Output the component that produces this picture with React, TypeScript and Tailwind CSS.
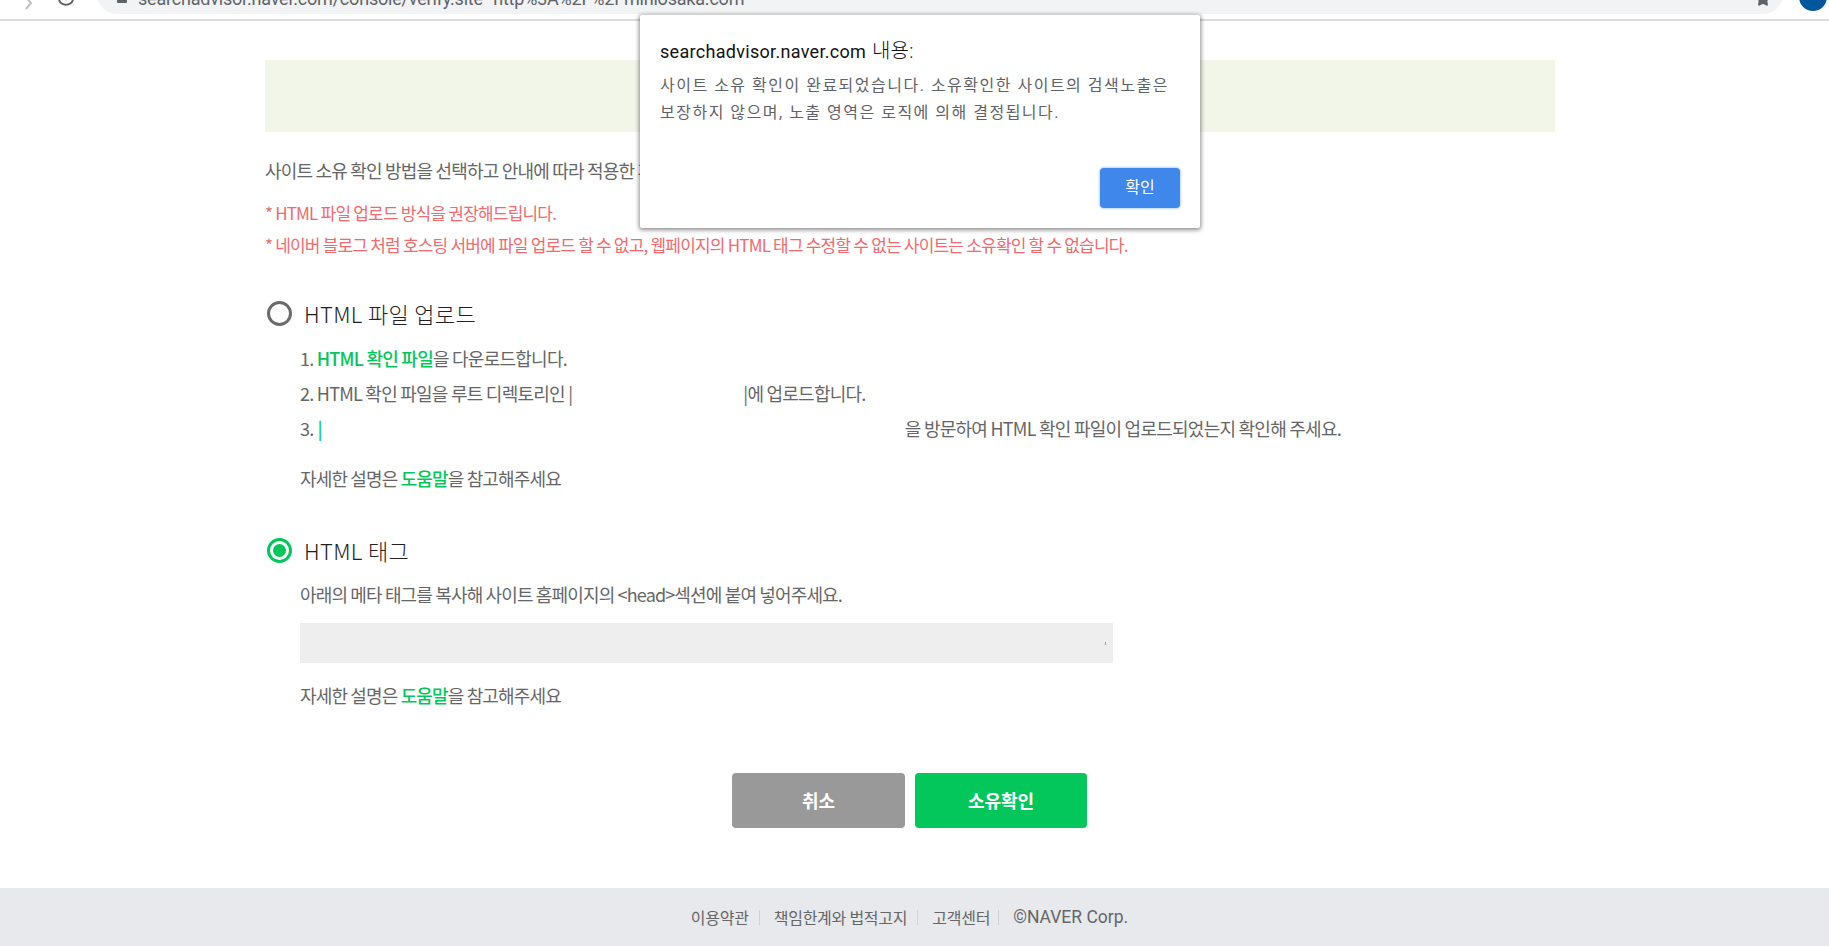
import { Star } from 'lucide-react';

const kr = '[font-family:"Noto_Sans_CJK_KR","Noto_Sans",sans-serif]';

const BrowserBar = () => (
  <div className="h-[21px] overflow-hidden border-b-2 border-[#dadce0] bg-white relative flex">
    <svg className="absolute left-[24px] top-0" width="10" height="14" viewBox="0 0 10 14" fill="none">
      <path d="M2 -3 L7 3 L2 9" stroke="#bdc1c6" strokeWidth="2" />
    </svg>
    <svg className="absolute left-[55px] top-0" width="22" height="14" viewBox="0 0 22 14" fill="none">
      <path d="M4 0 A7.5 7.5 0 0 0 18 0" stroke="#5f6368" strokeWidth="2" />
    </svg>
    <div className="ml-[97px] mt-[-26px] h-[40px] w-[1686px] rounded-full bg-[#f1f3f4] flex items-end relative">
      <div className="absolute left-[20px] bottom-[11px] h-[5px] w-[10px] rounded-[1px] bg-[#5f6368]" />
      <div className="ml-[41px] mb-[3px] text-[18px] leading-[24px] tracking-[-0.2px] text-[#5f6368] whitespace-nowrap font-['Roboto',sans-serif]">
        searchadvisor.naver.com/console/verify.site <span className="ml-[6px]">http%3A%2F%2Fminiosaka.com</span>
      </div>
      <Star className="absolute right-[12px] bottom-[7px] h-[16px] w-[16px] fill-[#5f6368] text-[#5f6368]" />
    </div>
    <div className="absolute left-[1799px] top-[-17px] h-[28px] w-[28px] rounded-full bg-[#01579b]" />
  </div>
);

const Radio = ({ on }: { on?: boolean }) =>
  on ? (
    <span className="h-[25px] w-[25px] rounded-full border-[3px] border-[#03c75a] flex items-center justify-center shrink-0">
      <span className="h-[13px] w-[13px] rounded-full bg-[#03c75a]" />
    </span>
  ) : (
    <span className="h-[25px] w-[25px] rounded-full border-[3px] border-[#6b6b6b] shrink-0" />
  );

const Green = ({ children }: { children: React.ReactNode }) => (
  <span className="text-[#03c75a] font-medium">{children}</span>
);

const Help = () => (
  <p className="text-[18px] leading-[24px] tracking-[-0.85px] text-[#666]">
    자세한 설명은 <Green>도움말</Green>을 참고해주세요
  </p>
);

const Dialog = () => (
  <div className="absolute left-[640px] top-[15px] h-[213px] w-[560px] rounded-[2px] bg-white shadow-[0_1px_4px_1px_rgba(0,0,0,0.45)] pl-[20px] pr-[20px] flex flex-col">
    <div className="mt-[24px] h-[24px] text-[18px] leading-[24px] tracking-[0.3px] text-[#111] whitespace-nowrap font-['Roboto','Noto_Sans_CJK_KR',sans-serif]">
      searchadvisor.naver.com <span className="ml-[1px] text-[20px] font-light">내용:</span>
    </div>
    <p className="mt-[9px] text-[16px] leading-[27px] tracking-[1.5px] text-[#5f6368] whitespace-nowrap font-['Roboto','Noto_Sans_CJK_KR',sans-serif]">
      사이트 소유 확인이 완료되었습니다. 소유확인한 사이트의 검색노출은
      <br />
      보장하지 않으며, 노출 영역은 로직에 의해 결정됩니다.
    </p>
    <button className="mt-[42px] self-end h-[40px] w-[80px] rounded-[4px] bg-[#3f87ea] shadow-[0_0_2px_1px_rgba(63,135,234,0.35)] text-white text-[16px] font-['Roboto','Noto_Sans_CJK_KR',sans-serif]">
      확인
    </button>
  </div>
);

export default function App() {
  return (
    <div className={`relative h-[946px] w-[1829px] overflow-hidden bg-white flex flex-col ${kr}`}>
      <BrowserBar />

      <main className="ml-[265px] w-[1290px]">
        <div className="mt-[39px] h-[72px] bg-[#f1f6e9]" />

        <p className="mt-[26px] text-[18px] leading-[24px] tracking-[-0.8px] text-[#666]">
          사이트 소유 확인 방법을 선택하고 안내에 따라 적용한 후 소유확인 버튼을 눌러주세요.
        </p>
        <p className="mt-[20px] text-[17px] leading-[22px] tracking-[-0.8px] text-[#f06a6e]">
          * HTML 파일 업로드 방식을 권장해드립니다.
        </p>
        <p className="mt-[10px] text-[17px] leading-[22px] tracking-[-0.8px] text-[#f06a6e]">
          * 네이버 블로그 처럼 호스팅 서버에 파일 업로드 할 수 없고, 웹페이지의 HTML 태그 수정할 수 없는 사이트는 소유확인 할 수 없습니다.
        </p>

        <div className="mt-[42px] ml-[2px] flex items-center gap-[12px] h-[30px]">
          <Radio />
          <span className="text-[22px] font-light tracking-[0.35px] text-[#222]">HTML 파일 업로드</span>
        </div>
        <ol className="mt-[13px] ml-[35px] text-[18px] leading-[35px] tracking-[-0.75px] text-[#666]">
          <li>
            1. <Green>HTML 확인 파일</Green>을 다운로드합니다.
          </li>
          <li className="flex">
            2. HTML 확인 파일을 루트 디렉토리인 |<span className="w-[171px]" />|에 업로드합니다.
          </li>
          <li className="flex">
            <span className="mr-[4px]">3.</span>
            <Green>|</Green>
            <span className="w-[583px]" />을 방문하여 HTML 확인 파일이 업로드되었는지 확인해 주세요.
          </li>
        </ol>
        <div className="mt-[20px] ml-[35px]">
          <Help />
        </div>

        <div className="mt-[45px] ml-[2px] flex items-center gap-[12px] h-[30px]">
          <Radio on />
          <span className="text-[22px] font-light tracking-[0.35px] text-[#222]">HTML 태그</span>
        </div>
        <p className="ml-[35px] mt-[17px] text-[18px] leading-[24px] tracking-[-0.85px] text-[#666]">
          아래의 메타 태그를 복사해 사이트 홈페이지의 &lt;head&gt;섹션에 붙여 넣어주세요.
        </p>
        <div className="relative ml-[35px] mt-[17px] h-[40px] w-[813px] bg-[#eee]">
          <span className="absolute right-[7px] top-[19px] h-[3px] w-px bg-[#999]" />
        </div>
        <div className="mt-[20px] ml-[35px]">
          <Help />
        </div>

        <div className="mt-[66px] ml-[467px] flex gap-[10px]">
          <button className="h-[55px] w-[173px] rounded-[4px] bg-[#999] text-white text-[18px] font-bold">취소</button>
          <button className="h-[55px] w-[172px] rounded-[4px] bg-[#03c75a] text-white text-[18px] font-bold">소유확인</button>
        </div>
      </main>

      <footer className="mt-auto h-[58px] bg-[#e7e9ed] flex items-center justify-center pr-[10px] text-[16px] tracking-[-0.25px] text-[#666]">
        <span>이용약관</span>
        <span className="ml-[10px] mr-[14px] h-[15px] w-px bg-[#cfd1d5]" />
        <span>책임한계와 법적고지</span>
        <span className="ml-[10px] mr-[14px] h-[15px] w-px bg-[#cfd1d5]" />
        <span>고객센터</span>
        <span className="ml-[8px] mr-[14px] h-[15px] w-px bg-[#cfd1d5]" />
        <span className="font-['Roboto',sans-serif] text-[17.5px] tracking-normal">©NAVER Corp.</span>
      </footer>

      <Dialog />
    </div>
  );
}
